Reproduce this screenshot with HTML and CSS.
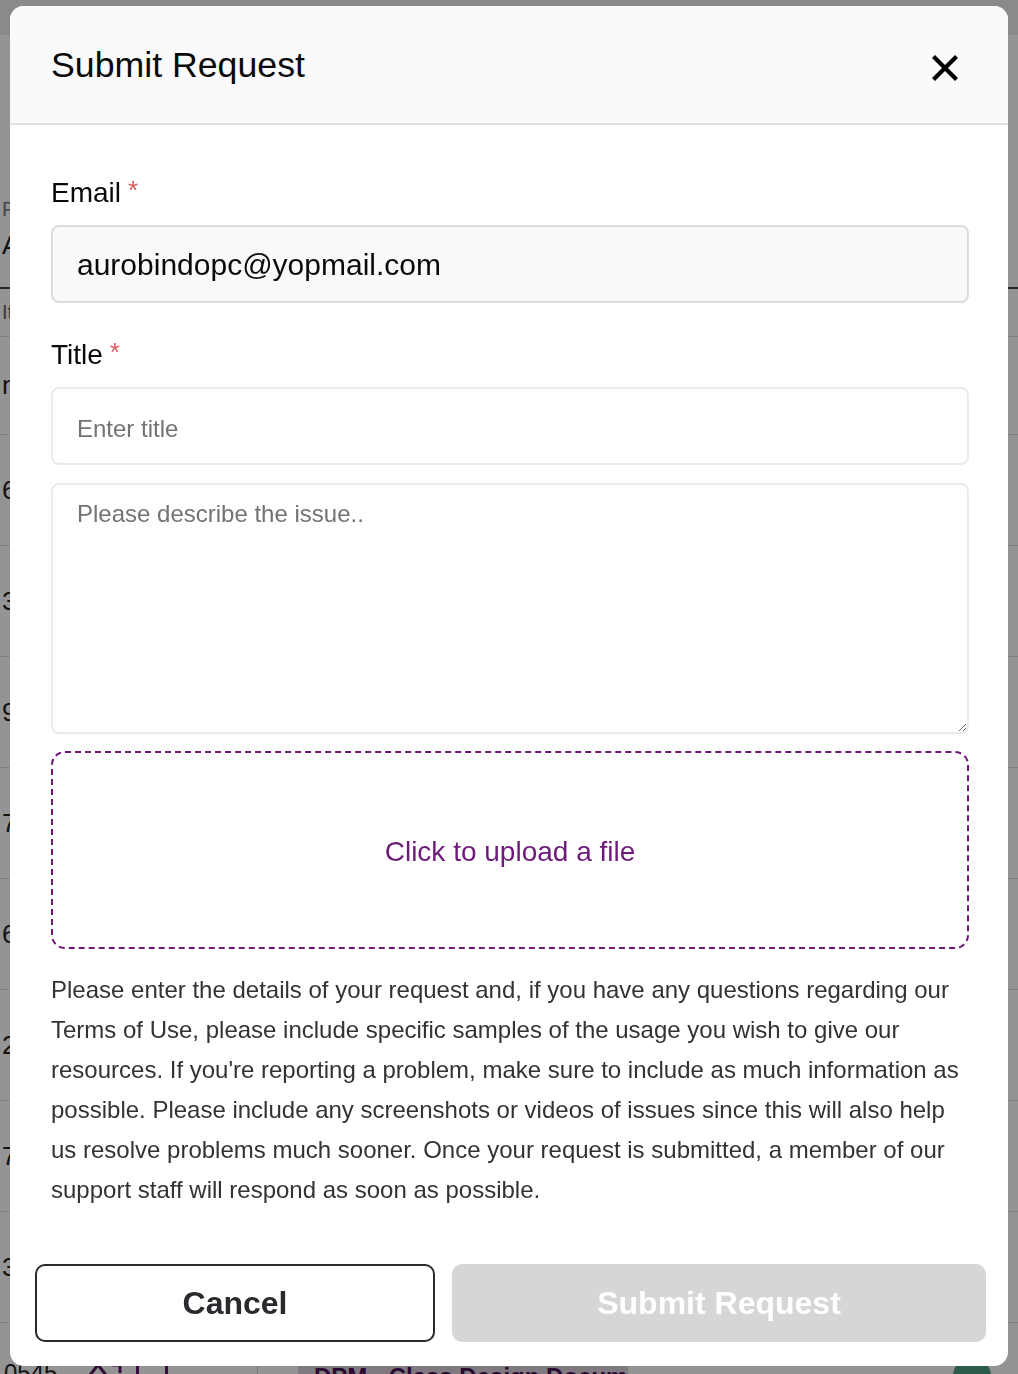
FILE: index.html
```html
<!DOCTYPE html>
<html lang="en">
<head>
<meta charset="utf-8">
<title>Submit Request</title>
<link rel="stylesheet" href="styles.css">
</head>
<body>
<div class="page">
  <div class="page-top"></div>
  <div class="filters">
    <div class="filter-label">Pr</div>
    <div class="filter-value">Al</div>
  </div>
  <div class="table-head"><span class="cell-first">It</span></div>
  <div class="row"><span class="cell-first">n</span></div>
  <div class="row"><span class="cell-first">6</span></div>
  <div class="row"><span class="cell-first">3</span></div>
  <div class="row"><span class="cell-first">9</span></div>
  <div class="row"><span class="cell-first">7</span></div>
  <div class="row"><span class="cell-first">6</span></div>
  <div class="row"><span class="cell-first">2</span></div>
  <div class="row"><span class="cell-first">7</span></div>
  <div class="row"><span class="cell-first">3</span></div>
  <div class="row row-last">
    <span class="cell-first">0545</span>
    <span class="cell-icons">
      <svg width="34" height="30" viewBox="0 0 34 30"><path d="M2 14 L10 4 L18 14 M24 4 H32 V12" fill="none" stroke="#5a1766" stroke-width="3"/></svg>
      <span class="box-icon"></span>
    </span>
    <span class="cell-course">DPM - Class Design Document</span>
    <span class="cell-avatar"></span>
  </div>
</div>

<div class="overlay">
  <div class="modal">
    <div class="modal-header">
      <h1 class="modal-title">Submit Request</h1>
      <button class="close-btn" aria-label="Close">
        <svg width="26" height="26" viewBox="0 0 26 26"><path d="M3 3 L23 23 M23 3 L3 23" stroke="#000" stroke-width="4.2" stroke-linecap="square"/></svg>
      </button>
    </div>
    <div class="modal-body">
      <label class="field-label">Email<span class="req">*</span></label>
      <input class="input input-filled" type="text" value="aurobindopc@yopmail.com">
      <label class="field-label field-label-gap">Title<span class="req">*</span></label>
      <input class="input input-plain" type="text" placeholder="Enter title">
      <textarea class="textarea" placeholder="Please describe the issue.."></textarea>
      <div class="upload">Click to upload a file</div>
      <p class="info">Please enter the details of your request and, if you have any questions regarding our Terms of Use, please include specific samples of the usage you wish to give our resources. If you're reporting a problem, make sure to include as much information as possible. Please include any screenshots or videos of issues since this will also help us resolve problems much sooner. Once your request is submitted, a member of our support staff will respond as soon as possible.</p>
    </div>
    <div class="modal-footer">
      <button class="btn btn-cancel">Cancel</button>
      <button class="btn btn-submit" disabled>Submit Request</button>
    </div>
  </div>
</div>
</body>
</html>
```

FILE: styles.css
```css
* { box-sizing: border-box; }
html, body { margin: 0; padding: 0; }
body {
  width: 1018px;
  height: 1374px;
  overflow: hidden;
  font-family: "Liberation Sans", Arial, Helvetica, sans-serif;
  background: #ffffff;
}

/* background page (mostly hidden behind the modal) */
.page {
  display: flex;
  flex-direction: column;
  width: 1018px;
}
.page-top { height: 35px; background: #eeeeee; }
.filters {
  height: 252px;
  display: flex;
  flex-direction: column;
  padding: 163px 0 0 2px;
}
.filter-label { font-size: 20px; color: #777; height: 32px; }
.filter-value { font-size: 26px; color: #222; }
.table-head {
  height: 50px;
  border-top: 2px solid #444;
  border-bottom: 1px solid #ddd;
  font-size: 20px;
  color: #666;
  display: flex;
  align-items: center;
}
.row {
  height: 111px;
  border-bottom: 1px solid #dcdcdc;
  display: flex;
  align-items: center;
  font-size: 26px;
  color: #222;
}
.row:nth-child(4) { height: 98px; }
.cell-first { width: 70px; margin-left: 2px; }
.row-last { align-items: flex-start; padding-top: 38px; }
.row-last .cell-first { margin-left: 4px; width: 84px; font-size: 24px; line-height: 24px; }
.cell-icons { display: flex; gap: 14px; width: 170px; align-items: flex-start; border-right: 1px solid #ccc; height: 70px; margin-top: -38px; padding-top: 38px; }
.box-icon { width: 32px; height: 26px; border: 3px solid #5a1766; border-radius: 6px; }
.cell-course {
  margin-left: 40px;
  width: 330px;
  height: 70px;
  margin-top: -38px;
  padding: 40px 0 0 16px;
  background: #dcd2dd;
  color: #4a1256;
  font-size: 24px;
  font-weight: bold;
  white-space: nowrap;
  overflow: hidden;
}
.cell-avatar {
  margin-left: 325px;
  margin-top: -4px;
  width: 38px;
  height: 38px;
  border-radius: 50%;
  background: #4a9e7e;
}

/* overlay + modal */
.overlay {
  position: fixed;
  inset: 0;
  background: rgba(0, 0, 0, 0.42);
  display: flex;
  justify-content: center;
  align-items: flex-start;
  padding-top: 6px;
}
.modal {
  width: 998px;
  height: 1360px;
  background: #ffffff;
  border-radius: 14px;
  overflow: hidden;
  display: flex;
  flex-direction: column;
}
.modal-header {
  height: 119px;
  flex: none;
  background: #fafafc;
  border-bottom: 2px solid #e2e2e4;
  display: flex;
  align-items: center;
  justify-content: space-between;
  padding: 0 50px 0 41px;
}
.modal-title {
  margin: 0;
  font-size: 35.7px;
  font-weight: normal;
  color: #0a0a0a;
  line-height: 40px;
}
.close-btn {
  border: 0;
  background: transparent;
  padding: 0;
  width: 26px;
  height: 26px;
  margin-top: 7px;
  display: flex;
}

.modal-body {
  padding: 51px 39px 0 41px;
  display: flex;
  flex-direction: column;
}
.field-label {
  font-size: 28px;
  line-height: 34px;
  color: #0a0a0a;
  margin-bottom: 15px;
}
.field-label-gap { margin-top: 35px; }
.req {
  color: #e05a5a;
  font-size: 26px;
  vertical-align: 3px;
  margin-left: 7px;
  line-height: 20px;
}
.input {
  height: 78px;
  width: 100%;
  border-radius: 8px;
  padding: 0 24px;
  font-family: "Liberation Sans", Arial, Helvetica, sans-serif;
  outline: none;
}
.input-filled {
  background: #f9f9fb;
  border: 2px solid #dcdcdf;
  font-size: 30px;
  color: #0a0a0a;
  padding-top: 2px;
}
.input-plain {
  background: #ffffff;
  border: 2px solid #ebebed;
  font-size: 24px;
  color: #0a0a0a;
  padding-top: 5px;
}
.input-plain::placeholder,
.textarea::placeholder { color: #737373; opacity: 1; }
.textarea {
  margin-top: 18px;
  height: 251px;
  width: 100%;
  border: 2px solid #ebebed;
  border-radius: 8px;
  padding: 15px 24px;
  font-family: "Liberation Sans", Arial, Helvetica, sans-serif;
  font-size: 24px;
  line-height: 28px;
  resize: vertical;
  outline: none;
}
.upload {
  margin-top: 17px;
  height: 198px;
  border: 2px dashed #701a78;
  border-radius: 14px;
  display: flex;
  align-items: center;
  justify-content: center;
  font-size: 28px;
  color: #6d1b7b;
  padding-top: 3px;
}
.info {
  margin: 21px 0 0 0;
  font-size: 24px;
  line-height: 40px;
  color: #333336;
}

.modal-footer {
  padding: 54px 22px 24px 25px;
  display: flex;
  gap: 17px;
}
.btn {
  height: 78px;
  border-radius: 10px;
  font-family: "Liberation Sans", Arial, Helvetica, sans-serif;
  font-size: 32px;
  font-weight: bold;
}
.btn-cancel {
  width: 400px;
  flex: none;
  background: #ffffff;
  border: 2px solid #2a2a2e;
  color: #2a2a2e;
}
.btn-submit {
  flex: 1;
  background: #d5d6d8;
  border: 0;
  color: #ffffff;
}
```
